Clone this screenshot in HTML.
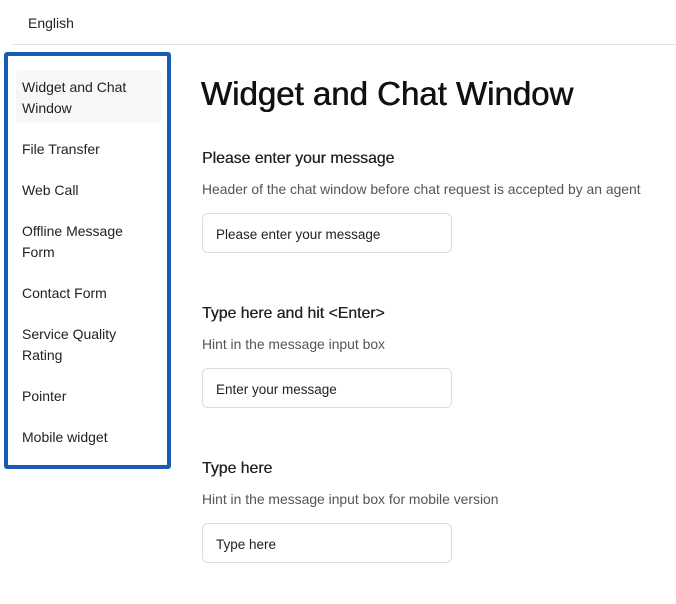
<!DOCTYPE html>
<html><head><style>
*{margin:0;padding:0;box-sizing:border-box}
body{width:676px;height:604px;background:#fff;font-family:"Liberation Sans",sans-serif;color:#212529;position:relative;overflow:hidden}
.lang{position:absolute;left:28px;top:15px;font-size:14px}
.hr{position:absolute;left:12px;right:0;top:44px;border-top:1px solid #e3e3e3}
.nav{position:absolute;left:4px;top:52px;width:167px;height:417px;border:4px solid #1a5bb5;border-radius:3px;background:#fff}
.hl{position:absolute;left:8px;top:14px;width:146px;height:53px;background:#f6f7f8;border-radius:4px}
.it{position:absolute;left:14px;font-size:14px;line-height:21px;color:#222}
h1{position:absolute;left:201px;top:75px;font-size:33px;font-weight:normal;color:#111;white-space:nowrap;text-shadow:0.4px 0 0 #111,-0.2px 0 0 #111}
.lbl{position:absolute;left:202px;font-size:15.8px;font-weight:normal;color:#222;text-shadow:0.3px 0 0 #222}
.desc{position:absolute;left:202px;font-size:13.9px;color:#555}
.inp{position:absolute;left:202px;width:250px;height:40px;border:1px solid #dcdcdc;border-radius:6px;padding-left:13px;font-size:13.5px;line-height:42px;color:#222}
</style></head><body>
<div class="lang">English</div>
<div class="hr"></div>
<div class="nav">
<div class="hl"></div>
<div class="it" style="top:21px">Widget and Chat<br>Window</div>
<div class="it" style="top:83px">File Transfer</div>
<div class="it" style="top:124px">Web Call</div>
<div class="it" style="top:165px">Offline Message<br>Form</div>
<div class="it" style="top:227px">Contact Form</div>
<div class="it" style="top:268px">Service Quality<br>Rating</div>
<div class="it" style="top:330px">Pointer</div>
<div class="it" style="top:371px">Mobile widget</div>
</div>
<h1>Widget and Chat Window</h1>
<div class="lbl" style="top:150px">Please enter your message</div>
<div class="desc" style="top:181px">Header of the chat window before chat request is accepted by an agent</div>
<div class="inp" style="top:213px">Please enter your message</div>
<div class="lbl" style="top:305px">Type here and hit &lt;Enter&gt;</div>
<div class="desc" style="top:336px">Hint in the message input box</div>
<div class="inp" style="top:368px">Enter your message</div>
<div class="lbl" style="top:460px">Type here</div>
<div class="desc" style="top:491px">Hint in the message input box for mobile version</div>
<div class="inp" style="top:523px">Type here</div>
</body></html>
